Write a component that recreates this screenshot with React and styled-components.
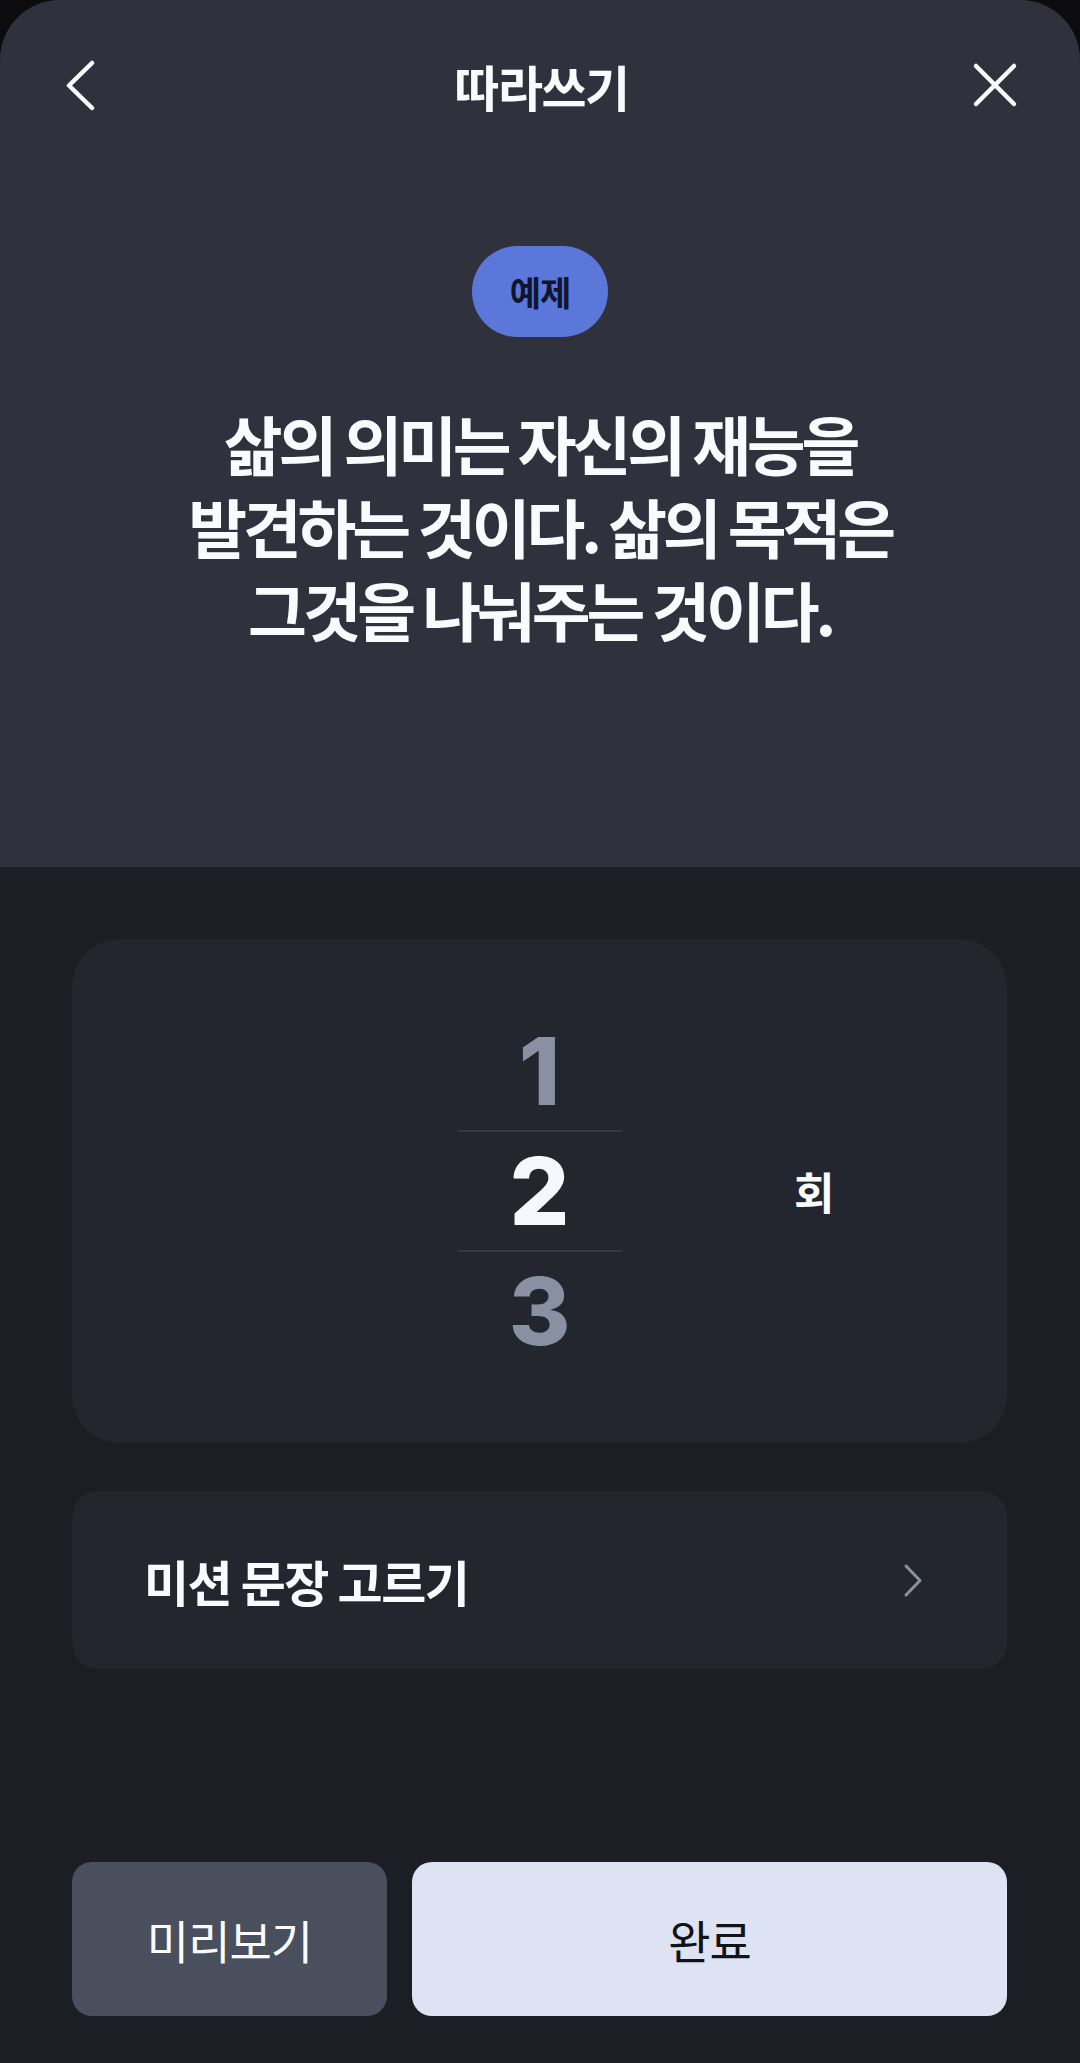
import React from 'react';
import styled, { createGlobalStyle } from 'styled-components';

const GlobalStyle = createGlobalStyle`
  html, body {
    margin: 0;
    padding: 0;
    background: #0c0c0e;
  }
  body {
    font-family: 'Noto Sans CJK KR', 'Noto Sans', sans-serif;
    -webkit-font-smoothing: antialiased;
  }
`;

const Sheet = styled.div`
  display: flex;
  flex-direction: column;
  min-height: 2063px;
  border-radius: 60px 60px 0 0;
  overflow: hidden;
  background: #1c1e25;
`;

const Top = styled.section`
  display: flex;
  flex-direction: column;
  align-items: center;
  background: #2f323d;
  padding-bottom: 217px;
`;

const Header = styled.header`
  display: grid;
  grid-template-columns: 1fr auto 1fr;
  align-items: center;
  width: 100%;
  height: 170px;
  padding: 0 62px 0 65px;
  box-sizing: border-box;
`;

const IconButton = styled.button`
  display: flex;
  align-items: center;
  justify-content: center;
  padding: 0;
  border: 0;
  background: none;
  cursor: pointer;
  justify-self: ${props => (props.end ? 'end' : 'start')};
`;

const Title = styled.h1`
  margin: 0;
  color: #fafbff;
  font-size: 49px;
  font-weight: 700;
  letter-spacing: -1.5px;
  line-height: 1;
`;

const Badge = styled.span`
  display: flex;
  align-items: center;
  justify-content: center;
  width: 136px;
  height: 91px;
  margin-top: 76px;
  border-radius: 46px;
  background: #5a77d9;
  color: #10152e;
  font-size: 34px;
  font-weight: 700;
  letter-spacing: -1px;
`;

const Quote = styled.p`
  margin: 64px 0 0;
  color: #fafbff;
  font-size: 64px;
  font-weight: 700;
  letter-spacing: -4.2px;
  line-height: 83px;
  text-align: center;
`;

const Body = styled.section`
  display: flex;
  flex: 1;
  flex-direction: column;
  gap: 48px;
  padding: 72px 73px 47px 72px;
`;

const PickerCard = styled.div`
  display: grid;
  grid-template-columns: 1fr 164px 1fr;
  align-items: center;
  height: 504px;
  border-radius: 48px;
  background: #23262e;
`;

const Wheel = styled.div`
  grid-column: 2;
  display: flex;
  flex-direction: column;
`;

const WheelItem = styled.div`
  height: 118px;
  line-height: 118px;
  text-align: center;
  font-family: Inter, 'Noto Sans', sans-serif;
  font-size: 94px;
  font-weight: 800;
  color: ${props => (props.active ? '#f7f8ff' : '#8990a1')};

  & + & {
    border-top: 2px solid #353843;
  }
`;

const Unit = styled.span`
  justify-self: center;
  color: #fafbff;
  font-size: 44px;
  font-weight: 700;
`;

const MissionRow = styled.button`
  display: flex;
  align-items: center;
  justify-content: space-between;
  height: 178px;
  padding: 0 84px 0 72px;
  border: 0;
  border-radius: 26px;
  background: #23262e;
  color: #fafbff;
  font-family: inherit;
  font-size: 49px;
  font-weight: 700;
  letter-spacing: -1.5px;
  cursor: pointer;
`;

const Actions = styled.div`
  display: grid;
  grid-template-columns: 315px 1fr;
  gap: 25px;
  margin-top: auto;
`;

const ActionButton = styled.button`
  height: 154px;
  border: 0;
  border-radius: 20px;
  background: ${props => (props.primary ? '#dde3f3' : '#4a4f5e')};
  color: ${props => (props.primary ? '#111317' : '#fafbff')};
  font-family: inherit;
  font-size: 46px;
  font-weight: 400;
  letter-spacing: -1px;
  cursor: pointer;
`;

const BackIcon = () => (
  <svg width="30" height="53" viewBox="0 0 30 53" fill="none">
    <path d="M27 4 L4 26.5 L27 49" stroke="#fafbff" strokeWidth="4.5" strokeLinecap="round" strokeLinejoin="round" />
  </svg>
);

const CloseIcon = () => (
  <svg width="46" height="46" viewBox="0 0 46 46" fill="none">
    <path d="M4 4 L42 42 M42 4 L4 42" stroke="#fafbff" strokeWidth="4.5" strokeLinecap="round" />
  </svg>
);

const ChevronRight = () => (
  <svg width="20" height="35" viewBox="0 0 20 35" fill="none">
    <path d="M3 3 L17 17.5 L3 32" stroke="#8b909b" strokeWidth="3" strokeLinecap="round" strokeLinejoin="round" />
  </svg>
);

export default function App() {
  return (
    <>
      <GlobalStyle />
      <Sheet>
        <Top>
          <Header>
            <IconButton aria-label="뒤로">
              <BackIcon />
            </IconButton>
            <Title>따라쓰기</Title>
            <IconButton end aria-label="닫기">
              <CloseIcon />
            </IconButton>
          </Header>
          <Badge>예제</Badge>
          <Quote>
            삶의 의미는 자신의 재능을
            <br />
            발견하는 것이다. 삶의 목적은
            <br />
            그것을 나눠주는 것이다.
          </Quote>
        </Top>
        <Body>
          <PickerCard>
            <Wheel>
              <WheelItem>1</WheelItem>
              <WheelItem active>2</WheelItem>
              <WheelItem>3</WheelItem>
            </Wheel>
            <Unit>회</Unit>
          </PickerCard>
          <MissionRow>
            미션 문장 고르기
            <ChevronRight />
          </MissionRow>
          <Actions>
            <ActionButton>미리보기</ActionButton>
            <ActionButton primary>완료</ActionButton>
          </Actions>
        </Body>
      </Sheet>
    </>
  );
}
